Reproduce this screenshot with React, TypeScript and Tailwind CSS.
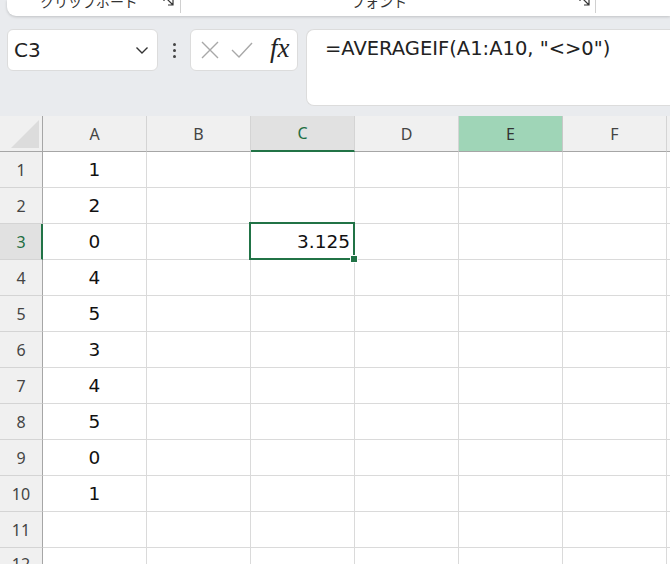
import React from "react";

const cols = ["A", "B", "C", "D", "E", "F"];
const aVals = ["1", "2", "0", "4", "5", "3", "4", "5", "0", "1", "", ""];
const dv = { fontFamily: '"DejaVu Sans", sans-serif' };

export default function App() {
  return (
    <div className="w-[670px] h-[564px] overflow-hidden bg-[#e9ebee] flex flex-col" style={{ fontFamily: '"Noto Sans CJK JP", "Noto Sans", sans-serif' }}>
      {/* Ribbon bottom */}
      <div className="ml-[7px] h-[16px] shrink-0 bg-white rounded-bl-[9px] shadow-[0_1px_3px_rgba(0,0,0,0.18)] overflow-hidden relative">
        <div className="flex items-center h-[24px] -mt-[11px] text-[14px] text-[#333]">
          <span className="ml-[33px] w-[123px]">クリップボード</span>
          <Launcher />
          <div className="ml-[5px] w-px h-[24px] bg-[#d0d0d0]" />
          <span className="ml-[170px] w-[228px]">フォント</span>
          <Launcher />
          <div className="ml-[4px] w-px h-[24px] bg-[#d0d0d0]" />
        </div>
      </div>

      {/* Formula bar */}
      <div className="flex items-start mt-[13px] h-[77px] shrink-0">
        <div className="ml-[7px] w-[151px] h-[42px] bg-white rounded-[6px] border border-[#dcdcdc] flex items-center justify-between pl-[6px] pr-[8px]">
          <span className="text-[20px] text-[#222]" style={dv}>C3</span>
          <svg width="14" height="9" viewBox="0 0 14 9" fill="none">
            <path d="M1.5 1.5 L7 7 L12.5 1.5" stroke="#333" strokeWidth="1.4" />
          </svg>
        </div>
        <div className="w-[32px] h-[42px] flex flex-col items-center justify-center gap-[3px]">
          <div className="w-[3px] h-[3px] bg-[#444] rounded-full" />
          <div className="w-[3px] h-[3px] bg-[#444] rounded-full" />
          <div className="w-[3px] h-[3px] bg-[#444] rounded-full" />
        </div>
        <div className="w-[108px] h-[42px] bg-white rounded-[6px] border border-[#dcdcdc] flex items-center pl-[9px]">
          <svg width="20" height="20" viewBox="0 0 20 20" fill="none">
            <path d="M2 2 L18 18 M18 2 L2 18" stroke="#a8a8a8" strokeWidth="1.4" />
          </svg>
          <svg className="ml-[11px]" width="22" height="18" viewBox="0 0 22 18" fill="none">
            <path d="M1 9 L8 16 L21 2" stroke="#a8a8a8" strokeWidth="1.4" />
          </svg>
          <span className="ml-[17px] text-[27px] italic text-[#222] leading-none -mt-[3px]" style={{ fontFamily: '"Liberation Serif", serif' }}>fx</span>
        </div>
        <div className="ml-[8px] flex-1 h-[77px] bg-white rounded-l-[8px] border border-r-0 border-[#dcdcdc] pl-[18px] pt-[4px]">
          <span className="text-[19.5px] text-[#222]" style={dv}>=AVERAGEIF(A1:A10, "&lt;&gt;0")</span>
        </div>
      </div>

      {/* Grid */}
      <div className="mt-[10px] flex-1 bg-white">
        <div className="grid grid-cols-[43px_repeat(6,104px)_1fr]">
          {/* header */}
          <div className="h-[36px] bg-[#f0f0f0] border-b border-r border-[#a6a6a6] relative flex items-end justify-end pr-[3px] pb-[3px]">
            <svg width="28" height="28" viewBox="0 0 28 28"><path d="M28 0 L28 28 L0 28 Z" fill="#dcdcdc" /></svg>
          </div>
          {cols.map((c) => {
            const sel = c === "C";
            const hi = c === "E";
            return (
              <div
                key={c}
                className={
                  "h-[36px] flex items-center justify-center text-[16px] border-r " +
                  (sel
                    ? "bg-[#e1e1e1] text-[#1e6e42] border-b-2 border-b-[#217346] border-r-[#d4d4d4]"
                    : hi
                    ? "bg-[#9fd5b7] text-[#333] border-b border-b-[#a6a6a6] border-r-[#c8c8c8]"
                    : "bg-[#f0f0f0] text-[#444] border-b border-b-[#a6a6a6] border-r-[#d4d4d4]")
                }
                style={{ fontFamily: '"Noto Sans", sans-serif' }}
              >
                {c}
              </div>
            );
          })}
          <div className="h-[36px] bg-[#f0f0f0] border-b border-[#a6a6a6]" />

          {aVals.map((v, i) => {
            const r = i + 1;
            const selRow = r === 3;
            return (
              <React.Fragment key={r}>
                <div
                  className={
                    "h-[36px] flex items-center justify-center text-[16px] border-b border-b-[#d4d4d4] " +
                    (selRow
                      ? "bg-[#e1e1e1] text-[#1e6e42] border-r-2 border-r-[#217346] pl-[1px]"
                      : "bg-[#f0f0f0] text-[#444] border-r border-r-[#a6a6a6]") +
                    (r === 12 ? " items-start pt-[4px]" : "")
                  }
                  style={{ fontFamily: '"Noto Sans", sans-serif' }}
                >
                  {r}
                </div>
                {cols.map((c) => (
                  <div
                    key={c}
                    className="h-[36px] border-r border-b border-[#dadada] relative flex items-center"
                  >
                    {c === "A" && v !== "" && (
                      <span className="w-full text-center text-[18.5px] text-[#111]" style={dv}>{v}</span>
                    )}
                    {c === "C" && r === 3 && (
                      <>
                        <span className="w-full text-right pr-[4px] text-[18.5px] text-[#111]" style={dv}>3.125</span>
                        <div className="absolute z-10 -left-[2px] -top-[2px] w-[106px] h-[38px] border-2 border-[#217346]" />
                        <div className="absolute z-20 -right-[4px] -bottom-[4px] w-[8px] h-[8px] bg-[#217346] border border-white" />
                      </>
                    )}
                  </div>
                ))}
                <div className="h-[36px] border-b border-[#dadada]" />
              </React.Fragment>
            );
          })}
        </div>
      </div>
    </div>
  );
}

function Launcher() {
  return (
    <svg width="12" height="12" viewBox="0 0 12 12" fill="none">
      <path d="M1 1 H6 M1 1 V6" stroke="#333" strokeWidth="1.2" />
      <path d="M3 3 L10 10 M10 5 V10 H5" stroke="#333" strokeWidth="1.2" />
    </svg>
  );
}
